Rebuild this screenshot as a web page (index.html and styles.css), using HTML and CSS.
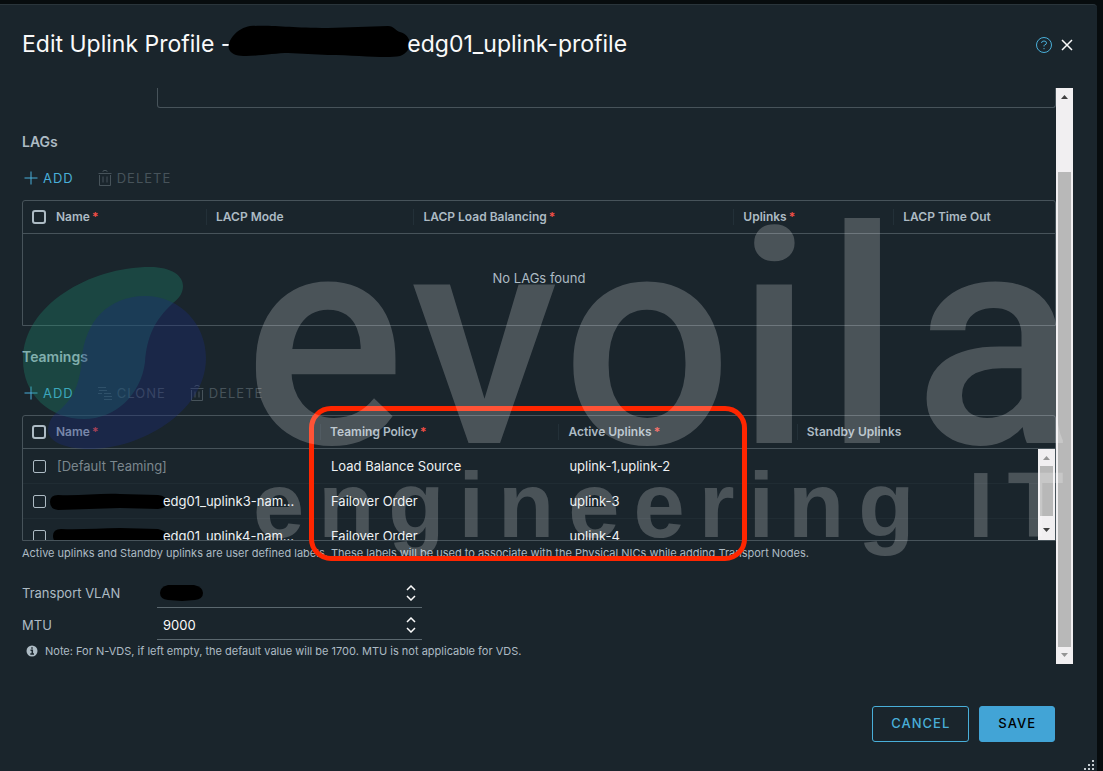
FILE: index.html
```
<!DOCTYPE html>
<html lang="en">

<head>
  <title>Edit Uplink Profile</title>
  <meta charset="UTF-8">
  <meta name="viewport" content="width=device-width, initial-scale=1">
  <link rel="stylesheet" href="styles.css">
</head>

<body>
  <svg class="sprite" width="0" height="0">
    <symbol id="plus" viewBox="0 0 14 14">
      <path d="M7 0.5V13.5M0.5 7H13.5" />
    </symbol>
    <symbol id="trash" viewBox="0 0 14 16">
      <path d="M0.5 3.5H13.5M1.5 5V15.5H12.5V5M5 6.5V12.5M9 6.5V12.5M5 2V1.5Q5 0.5 6 0.5H8Q9 0.5 9 1.5V2" />
    </symbol>
    <symbol id="clone" viewBox="0 0 14 14">
      <path d="M0 1.5H8M1 4.5H9M0 7.5H4M6 7.5H13M6 10.5H14M6 13.5H14" />
    </symbol>
  </svg>

  <main class="dialog">
    <header class="header">
      <h1 class="title">
        <span>Edit Uplink Profile -</span>
        <svg class="title-mask" viewBox="0 0 182 34" aria-hidden="true">
          <path d="M22 1C50 0 60 3 100 3L160 1C166 1 168 6 172 7C184 10 186 26 172 31C158 34 130 30 100 30L60 28C45 28 20 33 8 30C-3 26 0 17 5 11C10 5 16 2 22 1Z" />
        </svg>
        <span>edg01_uplink-profile</span>
      </h1>
      <button class="icon-btn help" aria-label="Help">
        <svg width="18" height="18" viewBox="0 0 18 18">
          <circle cx="9" cy="9" r="7.5" />
          <path d="M6.5 7Q6.5 5 9 5T11.5 7Q11.5 8.500 9.500 9Q9 9.200 9 10.500M9 12V13.200" />
        </svg>
      </button>
      <button class="icon-btn close" aria-label="Close">
        <svg width="12" height="12" viewBox="0 0 12 12">
          <path d="M1 1L11 11M11 1L1 11" />
        </svg>
      </button>
    </header>

    <div class="body">
      <div class="content">
        <textarea class="description" aria-label="Description"></textarea>

        <h2 class="section">LAGs</h2>
        <div class="toolbar">
          <button class="tool"><svg width="14" height="14"><use href="#plus" /></svg>ADD</button>
          <button class="tool" disabled><svg width="14" height="16"><use href="#trash" /></svg>DELETE</button>
        </div>
        <div class="grid lags">
          <table>
            <colgroup>
              <col class="w-check">
              <col class="w-lag-name">
              <col class="w-mode">
              <col class="w-balancing">
              <col class="w-uplinks">
              <col>
            </colgroup>
            <thead>
              <tr>
                <th><input type="checkbox" aria-label="Select all LAGs"></th>
                <th>Name<i>*</i></th>
                <th class="sep">LACP Mode</th>
                <th class="sep">LACP Load Balancing<i>*</i></th>
                <th class="sep">Uplinks<i>*</i></th>
                <th class="sep">LACP Time Out</th>
              </tr>
            </thead>
            <tbody>
              <tr>
                <td class="empty" colspan="6">No LAGs found</td>
              </tr>
            </tbody>
          </table>
        </div>

        <h2 class="section">Teamings</h2>
        <div class="toolbar">
          <button class="tool"><svg width="14" height="14"><use href="#plus" /></svg>ADD</button>
          <button class="tool" disabled><svg width="14" height="14"><use href="#clone" /></svg>CLONE</button>
          <button class="tool" disabled><svg width="14" height="16"><use href="#trash" /></svg>DELETE</button>
        </div>
        <div class="grid teamings">
          <table>
            <colgroup>
              <col class="w-check">
              <col class="w-team-name">
              <col class="w-policy">
              <col class="w-policy">
              <col>
            </colgroup>
            <thead>
              <tr>
                <th><input type="checkbox" aria-label="Select all teamings"></th>
                <th>Name<i>*</i></th>
                <th class="sep">Teaming Policy<i>*</i></th>
                <th class="sep">Active Uplinks<i>*</i></th>
                <th class="sep">Standby Uplinks</th>
              </tr>
            </thead>
            <tbody>
              <tr>
                <td><input type="checkbox" aria-label="Select default teaming"></td>
                <td class="muted">[Default Teaming]</td>
                <td>Load Balance Source</td>
                <td>uplink-1,uplink-2</td>
                <td></td>
              </tr>
              <tr>
                <td><input type="checkbox" aria-label="Select uplink3"></td>
                <td><div class="name-cell"><svg class="row-mask" viewBox="0 0 117 17" aria-hidden="true"><path d="M8 2C30 3 50 0 70 1L108 2Q117 3 117 9T108 16L70 15L8 17Q0 16 0 9T8 2Z" /></svg>edg01_uplink3-nam...</div></td>
                <td>Failover Order</td>
                <td>uplink-3</td>
                <td></td>
              </tr>
              <tr>
                <td><input type="checkbox" aria-label="Select uplink4"></td>
                <td><div class="name-cell"><svg class="row-mask" viewBox="0 0 117 17" aria-hidden="true"><path d="M11 1C30 2 50 0 70 0L108 1Q117 3 117 8T108 15L70 15L11 16Q3 15 3 8T11 1Z" /></svg>edg01_uplink4-nam...</div></td>
                <td>Failover Order</td>
                <td>uplink-4</td>
                <td></td>
              </tr>
            </tbody>
          </table>
          <div class="scrollbar inner" aria-hidden="true">
            <svg class="arrow dim" viewBox="0 0 7 4"><path d="M0 4L3.500 0L7 4Z" /></svg>
            <div class="thumb"></div>
            <svg class="arrow" viewBox="0 0 7 4"><path d="M0 0L3.500 4L7 0Z" /></svg>
          </div>
        </div>
        <p class="hint">Active uplinks and Standby uplinks are user defined labels. These labels will be used to associate with the Physical NICs while adding Transport Nodes.</p>

        <div class="field">
          <label for="vlan">Transport VLAN</label>
          <div class="number">
            <svg class="vlan-mask" viewBox="0 0 43 16" aria-hidden="true"><path d="M8 0L34 0Q43 2 43 8T35 15L22 16L8 15Q0 14 0 8T8 0Z" /></svg>
            <input id="vlan" type="text">
            <svg class="stepper" viewBox="0 0 10 16"><path d="M1 5L5 1L9 5M1 11L5 15L9 11" /></svg>
          </div>
        </div>
        <div class="field">
          <label for="mtu">MTU</label>
          <div class="number">
            <input id="mtu" type="text" value="9000">
            <svg class="stepper" viewBox="0 0 10 16"><path d="M1 5L5 1L9 5M1 11L5 15L9 11" /></svg>
          </div>
        </div>
        <p class="note">
          <svg width="12" height="12" viewBox="0 0 12 12">
            <circle cx="6" cy="6" r="5.500" />
            <path d="M6 2.200V3.800M4.500 5.300H6.300V8.800M4.300 9H8" />
          </svg>
          Note: For N-VDS, if left empty, the default value will be 1700. MTU is not applicable for VDS.
        </p>
      </div>
      <div class="scrollbar outer" aria-hidden="true">
        <svg class="arrow" viewBox="0 0 7 4"><path d="M0 4L3.500 0L7 4Z" /></svg>
        <div class="thumb"></div>
        <svg class="arrow dim" viewBox="0 0 7 4"><path d="M0 0L3.500 4L7 0Z" /></svg>
      </div>
    </div>

    <footer class="footer">
      <button class="btn">CANCEL</button>
      <button class="btn primary">SAVE</button>
    </footer>

    <svg class="grip" viewBox="0 0 11 11" aria-hidden="true">
      <path d="M8 0h2v2h-2zM4 4h2v2h-2zM8 4h2v2h-2zM0 8h2v2h-2zM4 8h2v2h-2zM8 8h2v2h-2z" />
    </svg>
  </main>

  <div class="highlight"></div>

  <!-- watermark -->
  <svg class="watermark" width="1103" height="771" viewBox="0 0 1103 771">
    <path class="leaf-green" d="M23 360C23 305 90 267 150 267C172 267 183 276 183 286C183 294 178 299 172 304C155 320 147 336 145 362C141 395 115 419 84 419C50 419 23 395 23 360Z" />
    <path class="leaf-blue" d="M145 296C180 296 206 324 206 358C206 412 140 449 90 449C62 449 47 440 48 429C49 419 55 413 61 409C75 396 80 382 82 358C85 322 108 296 145 296Z" />
    <text class="brand" y="443" x="244 410 562 736 824 914">evoila</text>
    <text class="tagline" x="253" y="537">engineering IT</text>
  </svg>
</body>

</html>
```

FILE: styles.css
```
* {
  box-sizing: border-box;
  padding: 0;
  margin: 0;
}

body {
  min-height: 100vh;
  padding: 4px 6px 0 0;
  background-color: #070c0e;
  color: #adbbc4;
  font-family: Inter, "Liberation Sans", sans-serif;
  font-size: 13px;
  overflow: hidden;
}

button,
input,
textarea {
  font: inherit;
  color: inherit;
  background: none;
  border: 0;
}

.sprite {
  position: absolute;
}

.dialog {
  position: relative;
  min-height: calc(100vh - 4px);
  padding: 18px 24px 29px 22px;
  display: flex;
  flex-direction: column;
  background-color: #1a252c;
  border-top: 1px solid #2a353b;
  border-radius: 0 4px 0 0;
}

/* header */
.header {
  display: flex;
  align-items: center;
  height: 65px;
  padding-bottom: 24px;
}

.title {
  display: flex;
  align-items: center;
  flex: 1;
  color: #fafafa;
  font-size: 23px;
  font-weight: 400;
  line-height: 28px;
  white-space: nowrap;
}

.title-mask {
  width: 182px;
  height: 34px;
  margin: 0 -3px 4px;
}

.icon-btn {
  display: flex;
  padding-top: 3px;
  fill: none;
}

.help {
  stroke: #49afd9;
}

.close {
  margin-left: 8px;
  stroke: #fafafa;
  stroke-width: 1.5;
}

/* scroll area */
.body {
  display: flex;
  height: 576px;
}

.content {
  flex: 1;
  min-width: 0;
}

.description {
  display: block;
  width: calc(100% - 135px);
  height: 20px;
  margin-left: 135px;
  border: 1px solid #47535a;
  border-top: 0;
  border-radius: 0 0 3px 3px;
  resize: none;
}

.section {
  margin-top: 24px;
  font-size: 14px;
  font-weight: 600;
  line-height: 20px;
}

.toolbar {
  display: flex;
  gap: 24px;
  height: 48px;
  padding: 15px 0 0 2px;
}

.tool {
  display: flex;
  align-items: center;
  gap: 5px;
  height: 22px;
  color: #49afd9;
  letter-spacing: 1px;
}

.tool:disabled {
  color: #47535a;
}

.tool svg {
  fill: none;
  stroke: currentColor;
}

.grid {
  position: relative;
  height: 126px;
  border: 1px solid #47535a;
  border-radius: 3px 3px 0 0;
  overflow: hidden;
}

.lags + .section {
  margin-top: 21px;
}

table {
  width: 100%;
  table-layout: fixed;
  border-collapse: separate;
  border-spacing: 0;
}

.w-check { width: 33px; }
.w-lag-name { width: 150px; }
.w-mode { width: 20.1%; }
.w-balancing { width: 31%; }
.w-uplinks { width: 15.5%; }
.w-team-name { width: 264px; }
.w-policy { width: 23.1%; }

th {
  height: 33px;
  border-bottom: 1px solid #47535a;
  font-size: 12px;
  font-weight: 600;
  text-align: left;
  line-height: 16px;
  white-space: nowrap;
}

th i {
  margin-left: 2px;
  color: #f54f47;
  font-style: normal;
}

.sep {
  padding-left: 10px;
  background: linear-gradient(#233038, #233038) no-repeat 0 center / 1px 16px;
}

td {
  height: 35px;
  padding-left: 11px;
  border-bottom: 1px solid #202c33;
  color: #eef2f4;
  line-height: 18px;
  white-space: nowrap;
}

td:first-child {
  padding-left: 0;
}

td:nth-child(2) {
  padding-left: 1px;
}

td.empty {
  height: 88px;
  border: 0;
  color: #adbbc4;
  text-align: center;
}

td.muted {
  color: #7b878e;
}

.name-cell {
  display: flex;
  align-items: center;
  margin-left: -7px;
}

.row-mask {
  flex: none;
  width: 117px;
  height: 17px;
  margin-right: -4px;
}

input[type="checkbox"] {
  appearance: none;
  display: block;
  width: 13px;
  height: 13px;
  margin-left: 10px;
  border: 1px solid #adbbc4;
  border-radius: 2px;
}

th input[type="checkbox"] {
  width: 14px;
  height: 14px;
  margin-left: 9px;
  border-width: 2px;
  border-radius: 3px;
}

/* scrollbars */
.scrollbar {
  display: flex;
  flex-direction: column;
  align-items: center;
  width: 17px;
  padding: 7px 2px;
  background-color: #f1eff1;
}

.arrow {
  width: 7px;
  height: 4px;
  fill: #404040;
}

.dim {
  fill: #959595;
}

.thumb {
  width: 13px;
  background-color: #b8b8b8;
}

.outer .thumb {
  flex: 1;
  margin: 73px 0 6px;
}

.inner {
  position: absolute;
  right: 0;
  bottom: 0;
  height: 91px;
}

.inner .thumb {
  height: 50px;
  margin: 6px 0 12px;
}

/* fields */
.hint {
  font-size: 11px;
  line-height: 16px;
  padding: 4px 0;
  margin-bottom: 12px;
  white-space: nowrap;
}

.field {
  display: flex;
  align-items: center;
  height: 32px;
}

.field label {
  width: 135px;
  line-height: 20px;
}

.number {
  display: flex;
  align-items: center;
  width: 265px;
  height: 30px;
  padding: 0 6px;
  border-bottom: 1px solid #5b686f;
}

.number input {
  flex: 1;
  min-width: 0;
  color: #fafafa;
}

.vlan-mask {
  width: 43px;
  height: 16px;
  margin-left: -3px;
}

.stepper {
  width: 10px;
  height: 16px;
  fill: none;
  stroke: #fafafa;
  stroke-width: 1.5;
}

.note {
  display: flex;
  align-items: center;
  gap: 7px;
  padding: 1px 0 0 4px;
  font-size: 11px;
  line-height: 18px;
}

.note circle {
  fill: #adbbc4;
}

.note path {
  fill: none;
  stroke: #1a252c;
  stroke-width: 1.5;
}

/* footer */
.footer {
  display: flex;
  justify-content: flex-end;
  gap: 10px;
  margin-top: auto;
  padding-right: 18px;
}

.btn {
  height: 36px;
  padding: 0 18px 3px;
  border: 1px solid #49afd9;
  border-radius: 3px;
  color: #49afd9;
  font-weight: 500;
  letter-spacing: 1px;
}

.primary {
  background-color: #42a4d6;
  border-color: #42a4d6;
  color: #000;
}

.grip {
  position: absolute;
  right: 2px;
  bottom: 0;
  width: 11px;
  height: 11px;
  fill: #c5cdd2;
}

/* overlays */
.highlight {
  position: absolute;
  left: 309px;
  top: 406px;
  width: 438px;
  height: 155px;
  border: 5px solid #ff2600;
  border-radius: 22px;
  pointer-events: none;
}

.watermark {
  position: absolute;
  left: 0;
  top: 0;
  pointer-events: none;
}

.leaf-green {
  fill: rgba(29, 150, 118, 0.3);
}

.leaf-blue {
  fill: rgba(27, 43, 122, 0.36);
}

.watermark text {
  fill: rgba(255, 255, 255, 0.21);
}

.brand {
  font-family: Roboto, sans-serif;
  font-size: 300px;
  font-weight: 500;
}

.tagline {
  font-family: "Liberation Sans", sans-serif;
  font-size: 92px;
  font-weight: 700;
  letter-spacing: 14px;
}
```
